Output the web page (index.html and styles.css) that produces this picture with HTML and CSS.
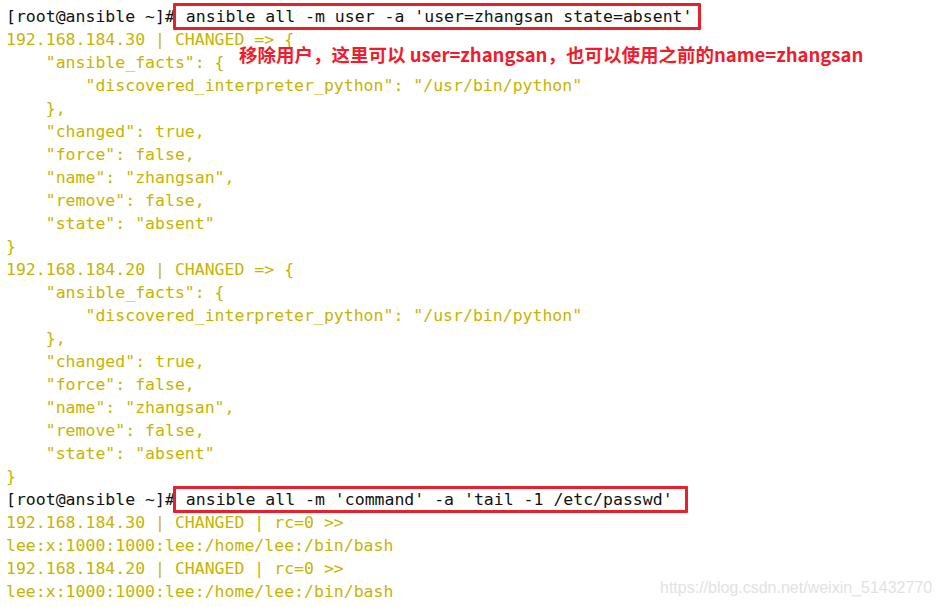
FILE: index.html
```html
<!DOCTYPE html>
<html lang="zh">
<head>
<meta charset="utf-8">
<title>ansible user</title>
<link rel="stylesheet" href="styles.css">
</head>
<body>
<div class="screen">
<pre class="term"><span class="prompt">[root@ansible ~]#<span class="cmd cmd-1"> ansible all -m user -a 'user=zhangsan state=absent'</span></span>
<span class="out">192.168.184.30 | CHANGED =&gt; {
    "ansible_facts": {
        "discovered_interpreter_python": "/usr/bin/python"
    },
    "changed": true,
    "force": false,
    "name": "zhangsan",
    "remove": false,
    "state": "absent"
}
192.168.184.20 | CHANGED =&gt; {
    "ansible_facts": {
        "discovered_interpreter_python": "/usr/bin/python"
    },
    "changed": true,
    "force": false,
    "name": "zhangsan",
    "remove": false,
    "state": "absent"
}</span>
<span class="prompt">[root@ansible ~]#<span class="cmd cmd-2"> ansible all -m 'command' -a 'tail -1 /etc/passwd'</span></span>
<span class="out">192.168.184.30 | CHANGED | rc=0 &gt;&gt;
lee:x:1000:1000:lee:/home/lee:/bin/bash
192.168.184.20 | CHANGED | rc=0 &gt;&gt;
lee:x:1000:1000:lee:/home/lee:/bin/bash</span></pre>
<div class="note">移除用户，这里可以 user=zhangsan，也可以使用之前的name=zhangsan</div>
<div class="watermark">https://blog.csdn.net/weixin_51432770</div>
</div>
</body>
</html>
```
FILE: styles.css
```css
html, body {
  margin: 0;
  padding: 0;
  background: #ffffff;
}

.screen {
  position: relative;
  width: 941px;
  height: 607px;
  overflow: hidden;
}

.term {
  margin: 0;
  padding: 5px 0 0 6px;
  font-family: "DejaVu Sans Mono", "Liberation Mono", monospace;
  font-size: 16.5px;
  line-height: 23px;
  color: #c6b400;
}

.prompt {
  color: #111111;
}

.out {
  color: #c6b400;
}

.cmd {
  border: 3px solid #e4222c;
  border-radius: 1px;
  padding: 1px 6px 1px 0;
  margin-left: -2px;
  color: #111111;
}

.cmd-2 {
  padding-right: 12px;
}

.note {
  position: absolute;
  left: 239px;
  top: 45px;
  font-family: "Noto Sans CJK SC", "Noto Sans", sans-serif;
  font-weight: 700;
  font-size: 18.5px;
  line-height: 19px;
  color: #f01c2c;
  white-space: nowrap;
}

.watermark {
  position: absolute;
  left: 660px;
  top: 578px;
  font-family: "Liberation Sans", Arial, sans-serif;
  font-size: 16px;
  line-height: 20px;
  color: #e2e2e2;
  white-space: nowrap;
}
```
